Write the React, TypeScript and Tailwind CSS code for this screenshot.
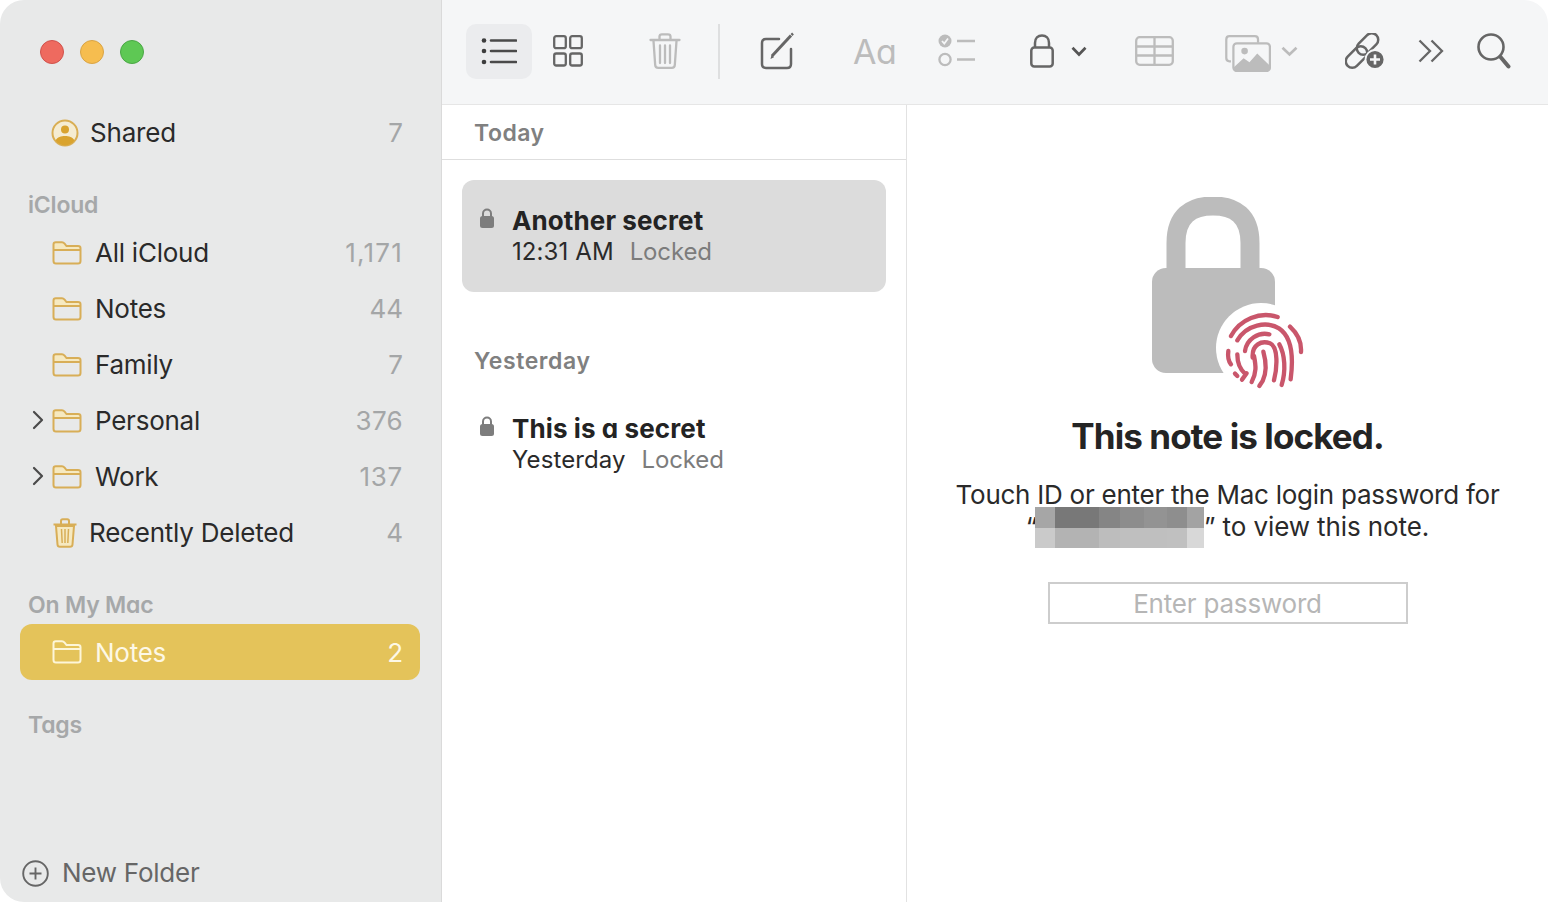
import React from "react";

const Folder = ({ light }: { light?: boolean }) => {
  const s = light ? "#fdf6d8" : "#d8ae57";
  return (
    <svg width="30" height="24" viewBox="0 0 30 24" fill="none" className="shrink-0">
      {!light && <path d="M2 7V3.500C2 2 3 1.200 4.500 1.200H10c1.200 0 1.800.5 2.600 1.400L14.500 5H26c1.500 0 2.400 1 2.400 2.200V9H2z" fill="#f6e9c0" />}
      <path d="M1.500 9h27M1.500 20V3.500c0-1.400 1-2.300 2.400-2.300H10c1.200 0 1.800.5 2.600 1.400L14.500 5H26c1.500 0 2.500.9 2.500 2.300V20c0 1.600-1 2.600-2.500 2.600H4c-1.500 0-2.500-1-2.500-2.600z" stroke={s} strokeWidth="2" />
    </svg>
  );
};

const SmallLock = () => (
  <svg width="16" height="21" viewBox="0 0 16 21" className="shrink-0">
    <path d="M4 9V5.500a4 4 0 0 1 8 0V9" fill="none" stroke="#7d7d7d" strokeWidth="2" />
    <rect x="1" y="8" width="14" height="12" rx="2.500" fill="#7d7d7d" />
  </svg>
);

const Row = ({ name, count, chevron, countCls }: { name: string; count: string; chevron?: boolean; countCls: string }) => (
  <div className="relative flex h-[56px] items-center pl-[52px] pr-[38px]">
    {chevron && (
      <svg width="12" height="20" viewBox="0 0 12 20" fill="none" className="absolute left-[32px] top-[17px]">
        <path d="M2 2l8 8-8 8" stroke="#4a4a4a" strokeWidth="2.200" strokeLinecap="round" strokeLinejoin="round" />
      </svg>
    )}
    <Folder />
    <span className="-mt-[2px] ml-[13px] text-[26px] tracking-[-0.25px] text-[#2a2a2a]">{name}</span>
    <span className={`-mt-[2px] ml-auto text-[26px] text-[#a4a6a7] ${countCls}`}>{count}</span>
  </div>
);

const Header = ({ children, cls }: { children: React.ReactNode; cls: string }) => (
  <div className={`flex items-center pl-[28px] text-[23px] font-semibold tracking-[-0.2px] text-[#a6a8a9] [font-feature-settings:'cv11'] ${cls}`}>{children}</div>
);

const NoteItem = ({ title, date, selected }: { title: string; date: string; selected?: boolean }) => (
  <div className={`mx-[20px] flex h-[112px] rounded-[12px] pl-[17px] pt-[25px] ${selected ? "bg-[#dcdcdc]" : "bg-white"}`}>
    <div className="mt-[3px]"><SmallLock /></div>
    <div className="ml-[17px] flex flex-col">
      <div className="h-[32px] text-[26px] font-bold leading-[32px] tracking-[0.1px] text-[#232323] [font-feature-settings:'cv11']">{title}</div>
      <div className="flex h-[30px] items-center text-[24px] tracking-[0.1px] text-[#2a2a2a]">
        <span>{date}</span>
        <span className="ml-[16px] tracking-[-0.15px] text-[#7c7c7c]">Locked</span>
      </div>
    </div>
  </div>
);

const blocksTop = ["bg-[#a6a6a6] w-[20px]", "bg-[#787878] w-[44px]", "bg-[#858585] w-[21px]", "bg-[#8d8d8d] w-[24px]", "bg-[#939393] w-[23px]", "bg-[#8e8e8e] w-[20px]", "bg-[#a3a3a3] w-[17px]"];
const blocksBottom = ["bg-[#cacaca] w-[20px]", "bg-[#b3b3b3] w-[44px]", "bg-[#bdbdbd] w-[21px]", "bg-[#bfbfbf] w-[24px]", "bg-[#bfbfbf] w-[23px]", "bg-[#c0c0c0] w-[20px]", "bg-[#d8d8d8] w-[17px]"];

const BigLock = () => (
  <svg width="152" height="200" viewBox="0 0 152 200" fill="none">
    <path d="M24 76V46C24 19 39 9 61 9s37 10 37 37v30" stroke="#bcbcbc" strokeWidth="19" />
    <rect x="0" y="71" width="123" height="105" rx="14" fill="#bcbcbc" />
    <circle cx="109" cy="151" r="45" fill="#ffffff" />
    <g transform="translate(-22 -16) scale(0.3333)" stroke="#c9566b" strokeWidth="13" strokeLinecap="round" fill="none">
      <path d="M303 465C330 415 390 390 443 408" />
      <path d="M480 437C505 460 515 485 513 513" />
      <path d="M295 510C293 525 295 540 303 550" />
      <path d="M322 478C350 430 410 420 447 442C482 465 492 520 482 595" />
      <path d="M345 510C350 475 385 452 418 460" />
      <path d="M448 490C465 520 468 570 455 612" />
      <path d="M322 520C322 550 330 565 345 578" />
      <path d="M368 530C365 490 395 478 420 487C445 497 442 560 432 598" />
      <path d="M400 512C408 540 410 575 398 600 L388 615" />
      <path d="M372 525C378 555 380 575 365 603" />
      <path d="M315 578L322 585" />
      <path d="M336 596L350 577" />
    </g>
  </svg>
);

const Toolbar = () => (
  <div className="flex h-[105px] shrink-0 items-center border-b border-[#e6e6e6] bg-[#f5f6f7] pb-[2px] pl-[24px]">
    <div className="flex h-[55px] w-[66px] items-center justify-center rounded-[10px] bg-[#ebecee]">
      <svg width="36" height="28" viewBox="0 0 36 28" fill="none">
        <g fill="#3d3d3d"><circle cx="3" cy="3.500" r="2.300" /><circle cx="3" cy="14" r="2.300" /><circle cx="3" cy="25" r="2.300" /></g>
        <path d="M10 3.500h25M10 14h25M10 25h25" stroke="#4a4a4a" strokeWidth="2.600" strokeLinecap="round" />
      </svg>
    </div>
    <svg width="30" height="32" viewBox="0 0 30 32" fill="none" className="ml-[21px]" stroke="#666" strokeWidth="2.300">
      <rect x="1.200" y="1.200" width="11.600" height="12" rx="2" /><rect x="17.200" y="1.200" width="11.600" height="12" rx="2" />
      <rect x="1.200" y="18.500" width="11.600" height="12" rx="2" /><rect x="17.200" y="18.500" width="11.600" height="12" rx="2" />
    </svg>
    <svg width="32" height="36" viewBox="0 0 32 36" fill="none" className="ml-[66px]" stroke="#bcbcbc" strokeWidth="2.300" strokeLinecap="round">
      <path d="M1.500 7h29M10.500 7V3.500C10.500 2 11.500 1.300 13 1.300h6c1.500 0 2.500.7 2.500 2.200V7" />
      <path d="M4.500 8l1.700 24c.1 1.800 1.200 2.800 3 2.800h13.600c1.800 0 2.900-1 3-2.800L27.500 8" />
      <path d="M11 12.500v17.500M16 12.500v17.500M21 12.500v17.500" />
    </svg>
    <div className="ml-[37px] h-[55px] w-[2px] bg-[#dedfe0]" />
    <svg width="34" height="38" viewBox="0 0 34 38" fill="none" className="ml-[40px]">
      <path d="M19 7H6C3.500 7 2 8.500 2 11v21c0 2.500 1.500 4 4 4h21c2.500 0 4-1.500 4-4V17" stroke="#666" strokeWidth="2.500" strokeLinecap="round" />
      <path d="M12 24L31 3.500" stroke="#666" strokeWidth="3" /><path d="M10.500 27l1-4 2.500 2.300z" fill="#666" />
      <path d="M31.500 3l1.500-1.500" stroke="#666" strokeWidth="2.500" />
    </svg>
    <span className="ml-[59px] w-[41px] text-[34px] tracking-[-0.5px] text-[#bcbcbc] [font-feature-settings:'cv11']">Aa</span>
    <svg width="38" height="34" viewBox="0 0 38 34" fill="none" className="ml-[44px]">
      <circle cx="7" cy="7" r="6.500" fill="#bcbcbc" /><path d="M4 7l2.300 2.500L10 4.500" stroke="#f5f6f7" strokeWidth="1.800" />
      <circle cx="7" cy="25.500" r="5.600" stroke="#bcbcbc" strokeWidth="2.300" />
      <path d="M19 7h18M19 25.500h18" stroke="#bcbcbc" strokeWidth="2.300" />
    </svg>
    <svg width="24" height="34" viewBox="0 0 24 34" fill="none" className="ml-[54px]" stroke="#666" strokeWidth="2.500">
      <path d="M5 14V9C5 4 8 1.500 12 1.500S19 4 19 9v5" />
      <rect x="1.300" y="13.500" width="21.400" height="19" rx="3" />
    </svg>
    <svg width="16" height="11" viewBox="0 0 16 11" fill="none" className="ml-[17px]"><path d="M1.500 1.800L8 8.500l6.500-6.700" stroke="#555" strokeWidth="2.700" /></svg>
    <svg width="39" height="30" viewBox="0 0 39 30" fill="none" className="ml-[48px]" stroke="#bcbcbc" strokeWidth="2.300">
      <rect x="1.200" y="1.200" width="36.600" height="27.600" rx="3.500" />
      <path d="M1.200 10.500h36.600M1.200 19.500h36.600M19.500 1.200v27.600" />
    </svg>
    <svg width="46" height="37" viewBox="0 0 47 38" fill="none" className="ml-[51px] mt-[4px]">
      <path d="M6 27H4.500C2.500 27 1.200 25.700 1.200 23.700V4.500C1.200 2.500 2.500 1.200 4.500 1.200h26c2 0 3.300 1.300 3.300 3.300V8" stroke="#bcbcbc" strokeWidth="2.300" />
      <rect x="8.500" y="8.500" width="37.500" height="28.500" rx="3.500" stroke="#bcbcbc" strokeWidth="2.300" />
      <circle cx="20" cy="16.500" r="3.400" fill="#bcbcbc" />
      <path d="M9 33l10-9 6 4 8-9 12.500 12v3.500c0 1.500-1 2.500-2.500 2.500H12c-2 0-3-1-3-2.500z" fill="#bcbcbc" />
    </svg>
    <svg width="17" height="11" viewBox="0 0 17 11" fill="none" className="ml-[10px]"><path d="M1.500 1.800L8.500 8.500l7-6.700" stroke="#bcbcbc" strokeWidth="2.700" /></svg>
    <svg width="40" height="36" viewBox="0 0 40 36" fill="none" className="ml-[47px]" stroke="#666" strokeWidth="2.500">
      <rect x="10" y="4.500" width="25" height="13" rx="6.500" transform="rotate(-45 22.500 11)" />
      <rect x="-1" y="17.500" width="25" height="13" rx="6.500" transform="rotate(-45 11.500 24)" />
      <circle cx="30" cy="26.500" r="9.500" fill="#666" stroke="#f5f6f7" strokeWidth="1.800" />
      <path d="M30 21.500v10M25 26.500h10" stroke="#f5f6f7" strokeWidth="2.600" />
    </svg>
    <svg width="26" height="24" viewBox="0 0 26 24" fill="none" className="ml-[33px]" stroke="#666" strokeWidth="2.300"><path d="M1.500 1.500L12 12 1.500 22.500M13.500 1.500L24 12 13.500 22.500" /></svg>
    <svg width="34" height="36" viewBox="0 0 34 36" fill="none" className="ml-[33px]" stroke="#666">
      <circle cx="14" cy="14" r="12.500" strokeWidth="2.600" /><path d="M23.500 24l8 9.500" strokeWidth="4" strokeLinecap="round" />
    </svg>
  </div>
);

export default function App() {
  return (
    <div className="h-screen w-full overflow-hidden bg-white [font-family:Inter,'Noto_Sans',sans-serif]">
      <div className="flex h-full w-full overflow-hidden rounded-[24px] bg-white">
        <aside className="flex w-[442px] shrink-0 flex-col border-r border-[#dadada] bg-[#e8e9e9]">
          <div className="flex h-[105px] shrink-0 items-center gap-[16px] pb-[2px] pl-[40px]">
            <div className="h-[24px] w-[24px] rounded-full border border-[#d0524c] bg-[#ee6a5f]" />
            <div className="h-[24px] w-[24px] rounded-full border border-[#d9a445] bg-[#f6bd4f]" />
            <div className="h-[24px] w-[24px] rounded-full border border-[#4aa745] bg-[#5ec854]" />
          </div>
          <div className="flex h-[56px] shrink-0 items-center pl-[51px] pr-[38px]">
            <svg width="28" height="28" viewBox="0 0 28 28" fill="none" className="shrink-0">
              <circle cx="14" cy="14" r="12.500" fill="#f5ecd2" stroke="#d9ae54" strokeWidth="2" />
              <circle cx="14" cy="10.500" r="4" fill="#d9a32e" />
              <path d="M4.500 21.500c2-3.500 5.500-4.500 9.500-4.500s7.500 1 9.500 4.500c-2 2.800-5.500 5-9.500 5s-7.500-2.200-9.500-5z" fill="#d9a32e" />
            </svg>
            <span className="-mt-[2px] ml-[11px] text-[26px] tracking-[-0.2px] text-[#2a2a2a]">Shared</span>
            <span className="-mt-[2px] ml-auto text-[26px] text-[#a4a6a7]">7</span>
          </div>
          <Header cls="mt-[24px] h-[40px]">iCloud</Header>
          <Row name="All iCloud" count="1,171" countCls="tracking-[1.2px]" />
          <Row name="Notes" count="44" countCls="tracking-[0px]" />
          <Row name="Family" count="7" countCls="tracking-[0px]" />
          <Row name="Personal" count="376" countCls="tracking-[0.3px]" chevron />
          <Row name="Work" count="137" countCls="tracking-[0.7px]" chevron />
          <div className="flex h-[56px] shrink-0 items-center pl-[52px] pr-[38px]">
            <svg width="26" height="30" viewBox="0 0 26 30" fill="none" className="shrink-0" stroke="#d8ae57" strokeWidth="2">
              <path d="M4 8h18l-1.500 18.500c-.1 1.500-1 2.300-2.500 2.300H8c-1.500 0-2.400-.8-2.500-2.300z" fill="#f6e9c0" />
              <path d="M1.500 6.500h23M9 6V3c0-1 .8-1.800 1.800-1.800h4.400c1 0 1.800.8 1.800 1.800v3" />
              <path d="M9.500 11l.7 14M13 11v14M16.500 11l-.7 14" strokeWidth="1.500" />
            </svg>
            <span className="-mt-[2px] ml-[11px] text-[26px] tracking-[-0.22px] text-[#2a2a2a]">Recently Deleted</span>
            <span className="-mt-[2px] ml-auto text-[26px] text-[#a4a6a7]">4</span>
          </div>
          <Header cls="mt-[25px] h-[38px]">On My Mac</Header>
          <div className="ml-[20px] mr-[21px] flex h-[56px] shrink-0 items-center rounded-[12px] bg-[#e4c35a] pl-[32px] pr-[17px]">
            <Folder light />
            <span className="ml-[13px] text-[26px] tracking-[-0.25px] text-[#fdf8e6]">Notes</span>
            <span className="ml-auto text-[26px] text-[#fdf8e6]">2</span>
          </div>
          <Header cls="mt-[25px] h-[40px]">Tags</Header>
          <div className="mt-auto flex h-[58px] shrink-0 items-center pl-[22px]">
            <svg width="27" height="27" viewBox="0 0 27 27" fill="none" stroke="#666" className="shrink-0">
              <circle cx="13.500" cy="13.500" r="12.300" strokeWidth="1.900" /><path d="M13.500 7.500v12M7.500 13.500h12" strokeWidth="1.900" />
            </svg>
            <span className="-mt-[2px] ml-[13px] text-[26px] tracking-[-0.25px] text-[#666]">New Folder</span>
          </div>
        </aside>
        <main className="flex min-w-0 flex-1 flex-col">
          <Toolbar />
          <div className="flex min-h-0 flex-1">
            <section className="flex w-[465px] shrink-0 flex-col border-r border-[#e2e2e2]">
              <div className="flex h-[55px] shrink-0 items-center border-b border-[#dedede] pl-[32px] pt-[2px] text-[23px] font-semibold tracking-[0.5px] text-[#808080]">Today</div>
              <div className="mt-[20px]"><NoteItem title="Another secret" date="12:31 AM" selected /></div>
              <div className="mt-[49px] flex h-[40px] items-center pl-[32px] text-[23px] font-semibold tracking-[0.6px] text-[#808080]">Yesterday</div>
              <div className="mt-[7px]"><NoteItem title="This is a secret" date="Yesterday" /></div>
            </section>
            <section className="flex min-w-0 flex-1 flex-col items-center pt-[92px]">
              <BigLock />
              <h1 className="mt-[17px] text-[35px] font-bold leading-[44px] tracking-[-0.9px] text-[#242424]">This note is locked.</h1>
              <div className="mt-[21px] whitespace-nowrap text-center text-[26px] leading-[32px] tracking-[-0.25px] text-[#2a2a2a]">
                <div>Touch ID or enter the Mac login password for</div>
                <div className="flex items-center justify-center">
                  <span>“</span>
                  <span className="-mb-[5px] -ml-[2px] -mt-[5px] inline-flex h-[41px] w-[169px] flex-col">
                    <span className="flex h-[21px]">{blocksTop.map((c) => <span key={c} className={c} />)}</span>
                    <span className="flex h-[20px]">{blocksBottom.map((c) => <span key={c} className={c} />)}</span>
                  </span>
                  <span className="tracking-[-0.1px]">” to view this note.</span>
                </div>
              </div>
              <div className="mt-[39px] flex h-[42px] w-[360px] items-center justify-center border-2 border-[#cdcdcd] pt-[1px] text-[26px] tracking-[-0.2px] text-[#b6b6b6]">Enter password</div>
            </section>
          </div>
        </main>
      </div>
    </div>
  );
}
